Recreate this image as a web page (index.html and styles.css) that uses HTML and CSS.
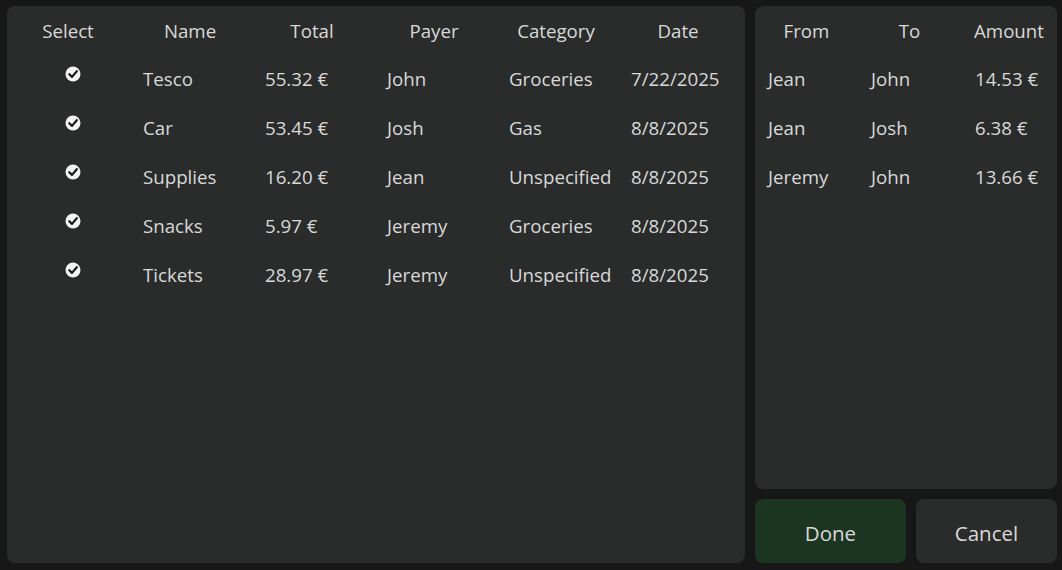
FILE: index.html
```html
<!DOCTYPE html>
<html>
<head>
<meta charset="utf-8">
<link rel="stylesheet" href="styles.css">
</head>
<body>
<div class="app">
  <section class="panel main">
    <div class="grid six">
      <div class="hd">Select</div><div class="hd">Name</div><div class="hd">Total</div><div class="hd">Payer</div><div class="hd">Category</div><div class="hd">Date</div>

      <div class="cell chk"><svg width="16" height="16" viewBox="0 0 16 16"><circle cx="8" cy="8" r="7.5" fill="#f4f4f4"/><path d="M4.3 8.2 L7 10.9 L11.8 5.2" fill="none" stroke="#1b1b1b" stroke-width="2.2" stroke-linecap="round" stroke-linejoin="round"/></svg></div>
      <div class="cell">Tesco</div><div class="cell">55.32 €</div><div class="cell">John</div><div class="cell">Groceries</div><div class="cell">7/22/2025</div>

      <div class="cell chk"><svg width="16" height="16" viewBox="0 0 16 16"><circle cx="8" cy="8" r="7.5" fill="#f4f4f4"/><path d="M4.3 8.2 L7 10.9 L11.8 5.2" fill="none" stroke="#1b1b1b" stroke-width="2.2" stroke-linecap="round" stroke-linejoin="round"/></svg></div>
      <div class="cell">Car</div><div class="cell">53.45 €</div><div class="cell">Josh</div><div class="cell">Gas</div><div class="cell">8/8/2025</div>

      <div class="cell chk"><svg width="16" height="16" viewBox="0 0 16 16"><circle cx="8" cy="8" r="7.5" fill="#f4f4f4"/><path d="M4.3 8.2 L7 10.9 L11.8 5.2" fill="none" stroke="#1b1b1b" stroke-width="2.2" stroke-linecap="round" stroke-linejoin="round"/></svg></div>
      <div class="cell">Supplies</div><div class="cell">16.20 €</div><div class="cell">Jean</div><div class="cell">Unspecified</div><div class="cell">8/8/2025</div>

      <div class="cell chk"><svg width="16" height="16" viewBox="0 0 16 16"><circle cx="8" cy="8" r="7.5" fill="#f4f4f4"/><path d="M4.3 8.2 L7 10.9 L11.8 5.2" fill="none" stroke="#1b1b1b" stroke-width="2.2" stroke-linecap="round" stroke-linejoin="round"/></svg></div>
      <div class="cell">Snacks</div><div class="cell">5.97 €</div><div class="cell">Jeremy</div><div class="cell">Groceries</div><div class="cell">8/8/2025</div>

      <div class="cell chk"><svg width="16" height="16" viewBox="0 0 16 16"><circle cx="8" cy="8" r="7.5" fill="#f4f4f4"/><path d="M4.3 8.2 L7 10.9 L11.8 5.2" fill="none" stroke="#1b1b1b" stroke-width="2.2" stroke-linecap="round" stroke-linejoin="round"/></svg></div>
      <div class="cell">Tickets</div><div class="cell">28.97 €</div><div class="cell">Jeremy</div><div class="cell">Unspecified</div><div class="cell">8/8/2025</div>
    </div>
  </section>
  <aside class="side">
    <section class="panel debts">
      <div class="grid three">
        <div class="hd">From</div><div class="hd">To</div><div class="hd">Amount</div>
        <div class="cell">Jean</div><div class="cell">John</div><div class="cell amt">14.53 €</div>
        <div class="cell">Jean</div><div class="cell">Josh</div><div class="cell amt">6.38 €</div>
        <div class="cell">Jeremy</div><div class="cell">John</div><div class="cell amt">13.66 €</div>
      </div>
    </section>
    <div class="actions">
      <button class="btn done">Done</button>
      <button class="btn cancel">Cancel</button>
    </div>
  </aside>
</div>
</body>
</html>
```

FILE: styles.css
```css
html, body {
  margin: 0;
  padding: 0;
  background: #171717;
}
body {
  font-family: "Open Sans", "Noto Sans", sans-serif;
  font-size: 18.7px;
  color: #d9d9d9;
}
.app {
  display: flex;
  gap: 10px;
  padding: 6px 5px 7px 7px;
  height: 570px;
  box-sizing: border-box;
}
.panel {
  background: #2a2b2b;
  border-radius: 8px;
}
.main {
  width: 738px;
}
.side {
  width: 302px;
  display: flex;
  flex-direction: column;
  gap: 10px;
}
.debts {
  flex: 1;
}
.grid {
  display: grid;
}
.six {
  grid-template-columns: repeat(6, 122px);
  grid-template-rows: 48px;
  grid-auto-rows: 49px;
}
.three {
  grid-template-columns: 103px 103px 1fr;
  grid-template-rows: 48px;
  grid-auto-rows: 49px;
}
.hd {
  display: flex;
  align-items: center;
  justify-content: center;
}
.three .hd:last-child {
  padding-right: 6px;
}
.cell {
  display: flex;
  align-items: center;
  padding-left: 14px;
  padding-bottom: 1px;
}
.three .cell {
  padding-left: 13px;
}
.three .amt {
  padding-left: 14px;
}
.chk {
  padding-left: 58px;
  padding-bottom: 10px;
}
.chk svg {
  display: block;
}
.actions {
  display: grid;
  grid-template-columns: 151px 1fr;
  gap: 10px;
  height: 64px;
}
.btn {
  border: none;
  border-radius: 8px;
  font-family: inherit;
  font-size: 20.5px;
  color: #d9d9d9;
  padding: 0;
  padding-top: 4px;
}
.done {
  background: #1c3520;
}
.cancel {
  background: #2a2b2b;
}
```
